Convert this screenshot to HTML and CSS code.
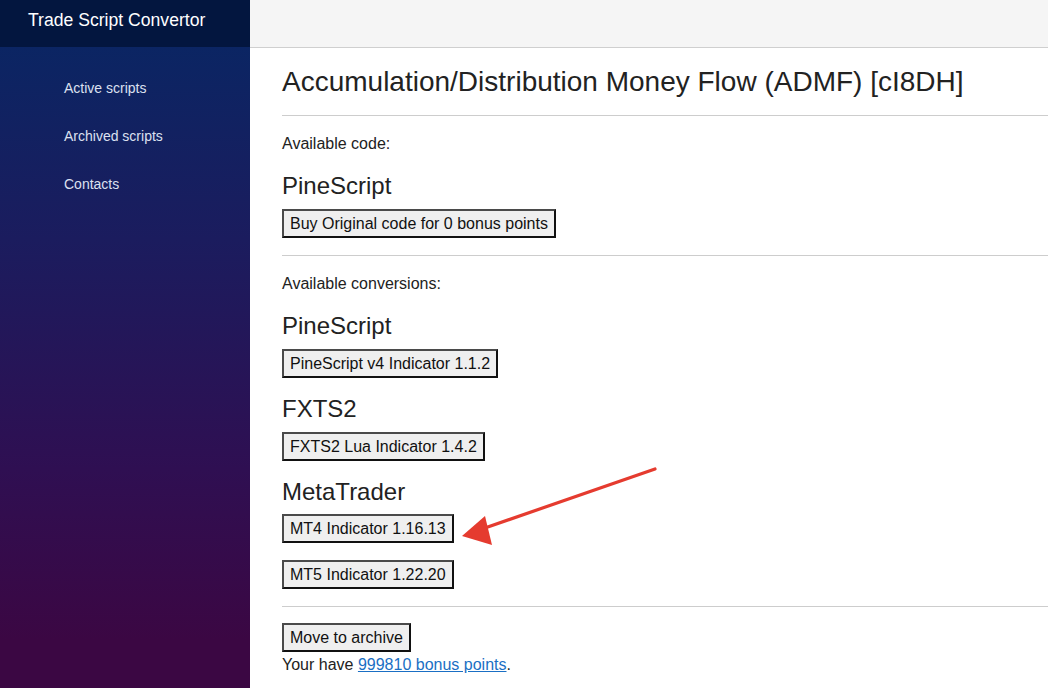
FILE: index.html
```html
<!DOCTYPE html>
<html>
<head>
<meta charset="utf-8">
<link rel="stylesheet" href="styles.css">
</head>
<body>
<div class="app">
  <aside class="sidebar">
    <div class="brand">Trade Script Convertor</div>
    <nav class="nav">
      <a class="nav-item">Active scripts</a>
      <a class="nav-item">Archived scripts</a>
      <a class="nav-item">Contacts</a>
    </nav>
  </aside>
  <main class="main">
    <div class="topbar"></div>
    <div class="content">
      <h1 class="title">Accumulation/Distribution Money Flow (ADMF) [cI8DH]</h1>
      <hr class="sep">
      <p class="label">Available code:</p>
      <h3 class="group">PineScript</h3>
      <button class="btn">Buy Original code for 0 bonus points</button>
      <hr class="sep">
      <p class="label">Available conversions:</p>
      <h3 class="group">PineScript</h3>
      <button class="btn">PineScript v4 Indicator 1.1.2</button>
      <h3 class="group">FXTS2</h3>
      <button class="btn">FXTS2 Lua Indicator 1.4.2</button>
      <h3 class="group">MetaTrader</h3>
      <button class="btn btn-tight">MT4 Indicator 1.16.13</button>
      <button class="btn btn-next">MT5 Indicator 1.22.20</button>
      <hr class="sep">
      <button class="btn btn-archive">Move to archive</button>
      <p class="points">Your have <a class="link">999810 bonus points</a>.</p>
    </div>
    <svg class="arrow" width="220" height="90" viewBox="0 0 220 90">
      <line x1="205" y1="3" x2="32" y2="63" stroke="#e53b2f" stroke-width="3.2" stroke-linecap="round"/>
      <polygon points="12,70 35,50 42,79" fill="#e53b2f"/>
    </svg>
  </main>
</div>
</body>
</html>
```
FILE: styles.css
```css
* { box-sizing: border-box; }
html, body { margin: 0; padding: 0; }
body {
  font-family: "Liberation Sans", Arial, sans-serif;
  color: #222;
  background: #fff;
  width: 1048px;
  height: 688px;
  overflow: hidden;
}
.app {
  display: flex;
  height: 688px;
}
.sidebar {
  width: 250px;
  flex: 0 0 250px;
  background: linear-gradient(180deg, #0b2563 47px, #1b1c5e 240px, #2f0f52 470px, #3b0743 640px, #3b0743 100%);
  display: flex;
  flex-direction: column;
}
.brand {
  height: 47px;
  background: #03163f;
  color: #fff;
  font-size: 17.6px;
  padding: 10px 0 0 28px;
  line-height: 20px;
}
.nav {
  display: flex;
  flex-direction: column;
  padding-top: 31px;
}
.nav-item {
  color: #dce0f0;
  font-size: 14px;
  line-height: 20px;
  height: 48px;
  padding-left: 64px;
}
.main {
  flex: 1;
  position: relative;
  display: flex;
  flex-direction: column;
}
.topbar {
  height: 48px;
  background: #f5f5f5;
  border-bottom: 1px solid #cfcfcf;
}
.content {
  padding: 0 0 0 32px;
  display: flex;
  flex-direction: column;
  align-items: flex-start;
}
.title {
  font-weight: normal;
  font-size: 28px;
  line-height: 32px;
  margin: 18px 0 0 0;
  color: #222;
}
.sep {
  align-self: stretch;
  border: 0;
  border-top: 1px solid #cdcdcd;
  margin: 17px 0 0 0;
  height: 0;
}
.label {
  font-size: 16px;
  line-height: 18px;
  margin: 19px 0 0 0;
  color: #222;
}
.group {
  font-weight: normal;
  font-size: 24px;
  line-height: 28px;
  margin: 17px 0 0 0;
  color: #222;
}
.label + .group { margin-top: 19px; }
.btn {
  font-family: "Liberation Sans", Arial, sans-serif;
  font-size: 16px;
  line-height: 17px;
  padding: 4px 6px;
  background: #efefef;
  color: #111;
  border: 2px solid;
  border-color: #4a4a4a #111 #111 #4a4a4a;
  margin: 9px 0 0 0;
  border-radius: 0;
}
.btn-tight { margin-top: 8px; }
.btn-next { margin-top: 17px; }
.btn-archive { margin-top: 16px; }
.points {
  font-size: 16px;
  line-height: 20px;
  margin: 3px 0 0 0;
  color: #222;
}
.link {
  color: #1a6fc4;
  text-decoration: underline;
}
.arrow {
  position: absolute;
  left: 200px;
  top: 466px;
}
```
